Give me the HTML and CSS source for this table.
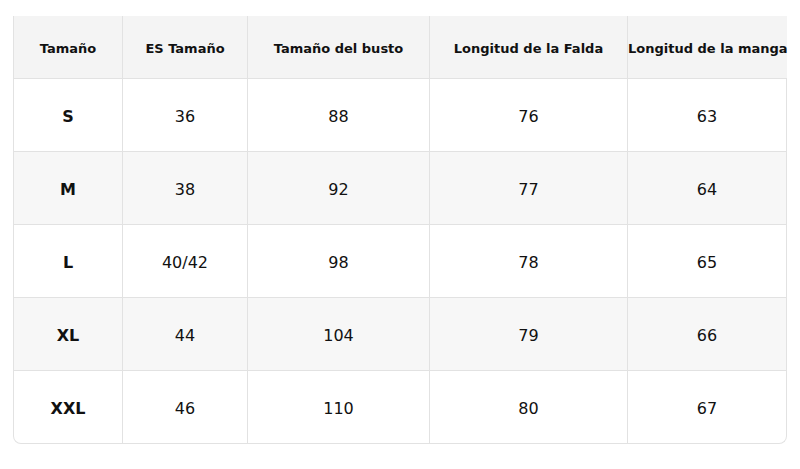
FILE: index.html
```html
<!DOCTYPE html>
<html lang="es">
<head>
<meta charset="utf-8">
<title>Tabla de tallas</title>
<link rel="stylesheet" href="styles.css">
</head>
<body>
<div class="wrap">
<table class="sizes">
<colgroup>
<col class="c1"><col class="c2"><col class="c3"><col class="c4"><col class="c5">
</colgroup>
<thead>
<tr><th>Tamaño</th><th>ES Tamaño</th><th>Tamaño del busto</th><th>Longitud de la Falda</th><th>Longitud de la manga</th></tr>
</thead>
<tbody>
<tr><td class="sz">S</td><td>36</td><td>88</td><td>76</td><td>63</td></tr>
<tr><td class="sz">M</td><td>38</td><td>92</td><td>77</td><td>64</td></tr>
<tr><td class="sz">L</td><td>40/42</td><td>98</td><td>78</td><td>65</td></tr>
<tr><td class="sz">XL</td><td>44</td><td>104</td><td>79</td><td>66</td></tr>
<tr><td class="sz">XXL</td><td>46</td><td>110</td><td>80</td><td>67</td></tr>
</tbody>
</table>
</div>
</body>
</html>
```
FILE: styles.css
```css
html, body {
  margin: 0;
  padding: 0;
  background: #ffffff;
}
body {
  font-family: "DejaVu Sans", "Liberation Sans", sans-serif;
  color: #111111;
}
.wrap {
  padding: 16px 13px 0 13px;
}
.sizes {
  width: 774px;
  table-layout: fixed;
  border-collapse: separate;
  border-spacing: 0;
}
.c1 { width: 110px; }
.c2 { width: 125px; }
.c3 { width: 182px; }
.c4 { width: 198px; }
.c5 { width: 159px; }
.sizes th,
.sizes td {
  text-align: center;
  vertical-align: middle;
  padding: 0;
  white-space: nowrap;
  border-right: 1px solid #e2e2e2;
  border-bottom: 1px solid #e2e2e2;
}
.sizes th:first-child,
.sizes td:first-child {
  border-left: 1px solid #e2e2e2;
}
.sizes th:last-child {
  border-right: none;
}
.sizes th {
  height: 60px;
  padding-top: 2px;
  background: #f4f4f4;
  font-size: 13px;
  font-weight: bold;
}
.sizes td {
  height: 69px;
  padding-top: 3px;
  font-size: 16px;
  background: #ffffff;
}
.sizes tbody tr:nth-child(even) td {
  background: #f7f7f7;
}
.sizes td.sz {
  font-weight: bold;
}
.sizes tbody tr:last-child td:first-child {
  border-bottom-left-radius: 8px;
}
.sizes tbody tr:last-child td:last-child {
  border-bottom-right-radius: 8px;
}
```
